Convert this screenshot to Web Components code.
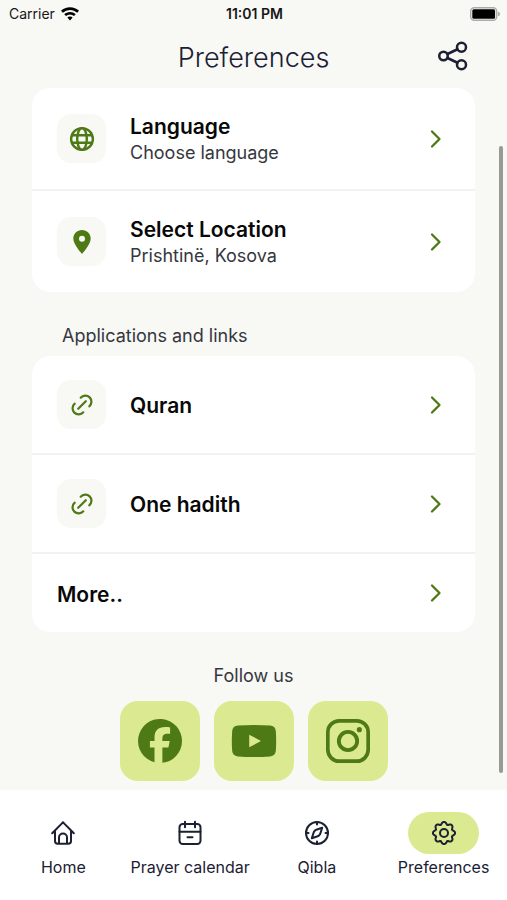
<!DOCTYPE html>
<html lang="en">
<head>
<meta charset="utf-8">
<meta name="viewport" content="width=device-width, initial-scale=1">
<title>Preferences</title>
<style>
:root{--page:#f8f8f5;--card:#fff;--green:#4e7a15;--lime:#dbea90;--ink:#1b2033;--soft:#35373e}
body{margin:0;background:var(--page);color:var(--ink);font-family:Inter,"Liberation Sans",sans-serif}
</style>
</head>
<body>
<preferences-app>
  <status-bar slot="top"></status-bar>
  <page-header slot="top">Preferences</page-header>
  <settings-group>
    <settings-row icon="globe" tall>Language<span slot="detail">Choose language</span></settings-row>
    <settings-row icon="pin" tall>Select Location<span slot="detail">Prishtinë, Kosova</span></settings-row>
  </settings-group>
  <settings-group heading="Applications and links">
    <settings-row icon="link" href="#quran">Quran</settings-row>
    <settings-row icon="link" href="#hadith">One hadith</settings-row>
    <settings-row href="#more">More..</settings-row>
  </settings-group>
  <follow-links>Follow us</follow-links>
  <tab-bar slot="bottom">
    <tab-item icon="home" href="#home">Home</tab-item>
    <tab-item icon="calendar" href="#calendar">Prayer calendar</tab-item>
    <tab-item icon="compass" href="#qibla">Qibla</tab-item>
    <tab-item icon="gear" href="#preferences" active>Preferences</tab-item>
  </tab-bar>
</preferences-app>
<script>
const gear = (() => {
  const pts = [];
  for (let i = 0; i < 96; i++) {
    const a = i / 96 * Math.PI * 2, r = 10 + 1.2 * Math.cos(8 * a) - .15 * Math.cos(16 * a);
    pts.push((12 + r * Math.sin(a)).toFixed(2) + ' ' + (12 - r * Math.cos(a)).toFixed(2));
  }
  return 'M' + pts.join('L') + 'Z';
})();
const ICONS = {
  globe: '<g stroke-width="2.4"><circle cx="12" cy="12" r="10.9"/><ellipse cx="12" cy="12" rx="4.8" ry="10.9"/><path d="M2.3 8.2h19.4M2.3 15.8h19.4"/></g>',
  pin: '<path fill="currentColor" stroke="none" fill-rule="evenodd" d="M12 0C7 0 3.3 3.8 3.3 8.6 3.3 14.7 12 24 12 24s8.7-9.3 8.7-15.4C20.7 3.8 17 0 12 0Zm0 5.7a3 3 0 1 1 0 6 3 3 0 0 1 0-6Z"/>',
  link: '<g stroke-width="2.2"><path d="M8.2 15.8l7.600-7.600M10.700 4.700A6.100 6.100 0 1 1 19.300 13.300M13.300 19.300A6.100 6.100 0 1 1 4.700 10.700"/></g>',
  chevron: '<path stroke-width="2.3" d="M8 4.500l7.500 7.500-7.500 7.500"/>',
  share: '<g stroke-width="2"><circle cx="4.4" cy="12" r="3.4"/><circle cx="18.8" cy="5" r="3.6"/><circle cx="18.8" cy="19" r="3.6"/><path d="M7.6 10.4l8-3.8M7.6 13.6l8 3.8"/></g>',
  facebook: '<path fill="currentColor" stroke="none" d="M24 12a12 12 0 1 0-15 11.6v-8H6.5V12H9v-1.6c0-4.1 1.9-6 5.9-6 .8 0 2.1.1 2.6.3v3.3h-1.4c-2 0-2.8.8-2.8 2.7V12h4l-.7 3.6h-3.3v8.3A12 12 0 0 0 24 12Z"/>',
  youtube: '<path fill="currentColor" stroke="none" fill-rule="evenodd" d="M3.2 3.6Q12 3 20.8 3.6Q23.6 3.8 23.9 6.5Q24.3 12 23.9 17.5Q23.6 20.1 20.8 20.4Q12 21 3.2 20.4Q.4 20.1 .1 17.5Q-.3 12 .1 6.5Q.4 3.8 3.2 3.6ZM9.4 8.6v6.8L15.8 12Z"/>',
  instagram: '<rect x="1" y="1" width="22" height="22" rx="6.2" stroke-width="2"/><circle cx="12" cy="12" r="5" stroke-width="2.1"/><circle cx="18.2" cy="5.8" r="1.4" fill="currentColor" stroke="none"/>',
  home: '<path d="M1.2 12.3 10.7 2.6 12 1.2l1.300 1.400 9.5 9.7M4 10v10a2.8 2.8 0 0 0 2.8 2.8h10.4A2.8 2.8 0 0 0 20 20V10M8 22.5v-6a4 4 0 0 1 8 0v6"/>',
  calendar: '<rect x="1.5" y="3" width="21" height="20" rx="3.2"/><path d="M1.5 10.8h21M7 .8v5.4M17 .8v5.4M9.5 16.3h5"/>',
  compass: '<circle cx="12" cy="12" r="11"/><path d="M12 1v2.5M12 20.5V23M1 12h2.5M20.500 12H23M17.200 6.800l-6.600 2.200-1.600 1.600-2.200 6.600 6.600-2.200 1.600-1.600Z"/>',
  gear: '<path d="' + gear + '"/><circle cx="12" cy="12" r="4"/>',
  wifi: '<g stroke="none" fill="currentColor"><path d="M12 3C7.300 3 3 4.800 0 7.800l2.500 2.600A13.500 13.500 0 0 1 12 6.600c3.700 0 7 1.400 9.500 3.800L24 7.800A17 17 0 0 0 12 3Z"/><path d="M12 9.200c-3 0-5.700 1.200-7.700 3.100l2.400 2.500a7.600 7.600 0 0 1 10.600 0l2.400-2.500A11 11 0 0 0 12 9.200Z"/><path d="M12 15.300c-1.400 0-2.600.5-3.500 1.400L12 20.500l3.500-3.800a5 5 0 0 0-3.500-1.400Z"/></g>'
};
class Base extends HTMLElement {
  connectedCallback() {
    if (this.shadowRoot) return;
    this.attachShadow({mode: 'open'}).innerHTML = '<style>*{box-sizing:border-box}a{color:inherit;text-decoration:none}button{font:inherit;color:inherit;background:none;border:0;padding:0;cursor:pointer}' + this.css() + '</style>' + this.html();
  }
}
customElements.define('app-icon', class extends Base {
  css() { return ':host{display:inline-flex;flex:none;width:24px;height:24px}svg{width:100%;height:100%;overflow:visible}'; }
  html() { return `<svg viewBox="0 0 24 24" fill="none" stroke="currentColor" stroke-width="2" stroke-linecap="round" stroke-linejoin="round" aria-hidden="true">${ICONS[this.getAttribute('name')]}</svg>`; }
});
customElements.define('preferences-app', class extends Base {
  css() { return `:host{display:flex;flex-direction:column;min-height:100vh;position:relative}
    main{flex:1;padding:0 32px 9px}
    .thumb{position:absolute;right:4px;top:146px;bottom:127px;width:4px;border-radius:2px;background:#999a96}`; }
  html() { return '<slot name="top"></slot><main><slot></slot></main><slot name="bottom"></slot><div class="thumb"></div>'; }
});
customElements.define('status-bar', class extends Base {
  css() { return `:host{display:grid;grid-template-columns:1fr auto 1fr;align-items:center;height:28px;padding:0 7px 0 9px;font-size:14px;line-height:20px;color:#161616}
    .left{display:flex;align-items:center;gap:6px}app-icon{width:18px;height:18px;color:#000}
    b{font-weight:600}.battery{justify-self:end;width:30px;height:14px}`; }
  html() { return `<span class="left"><span>Carrier</span><app-icon name="wifi"></app-icon></span><b>11:01 PM</b>
    <svg class="battery" viewBox="0 0 30 14" aria-label="Battery"><rect x=".7" y=".7" width="26" height="12.600" rx="3.500" fill="none" stroke="#aaaba7" stroke-width="1.400"/><rect x="2.300" y="2.300" width="22.800" height="9.400" rx="1.500"/><path d="M28 4.700q2 .6 2 2.300t-2 2.300Z" fill="#aaaba7"/></svg>`; }
});
customElements.define('page-header', class extends Base {
  css() { return `:host{display:grid;grid-template-columns:1fr auto 1fr;align-items:center;height:60px;padding:0 39px}
    h1{grid-column:2;margin:0;font-size:27px;line-height:36px;font-weight:300}
    button{justify-self:end;display:flex;padding-bottom:4px}app-icon{width:30px;height:30px}`; }
  html() { return '<h1><slot></slot></h1><button type="button" aria-label="Share"><app-icon name="share"></app-icon></button>'; }
});
customElements.define('settings-group', class extends Base {
  css() { return `:host{display:block}
    h2{margin:0;padding:31px 30px 7px;font-size:18px;line-height:26px;font-weight:400;color:var(--soft)}
    .card{display:grid;gap:2px;border-radius:18px;background:#f2f2f0;overflow:hidden}`; }
  html() { const h = this.getAttribute('heading'); return `${h ? `<h2>${h}</h2>` : ''}<div class="card"><slot></slot></div>`; }
});
customElements.define('settings-row', class extends Base {
  css() { return `:host{display:block;background:var(--card)}
    .row{display:flex;align-items:center;width:100%;min-height:78px;padding:14px 27px 14px 25px;text-align:left}
    .row.icon{min-height:97px;gap:24px}.row.tall{min-height:101px}
    .tile{display:grid;place-items:center;flex:none;width:49px;height:49px;border-radius:14px;background:var(--page);color:var(--green)}
    .text{flex:1;display:grid;padding-top:3px}
    .title{font-size:21px;line-height:26px;font-weight:600;color:#080808}
    ::slotted([slot=detail]){font-size:18px;line-height:26px;color:var(--soft)}
    .go{width:24px;height:24px;color:var(--green)}`; }
  html() {
    const i = this.getAttribute('icon'), href = this.getAttribute('href'), tag = href ? 'a' : 'button';
    const cls = 'row' + (i ? ' icon' : '') + (this.hasAttribute('tall') ? ' tall' : '');
    return `<${tag} class="${cls}" ${href ? `href="${href}"` : 'type="button"'}>${i ? `<span class="tile"><app-icon name="${i}"></app-icon></span>` : ''}<span class="text"><span class="title"><slot></slot></span><slot name="detail"></slot></span><app-icon class="go" name="chevron"></app-icon></${tag}>`;
  }
});
customElements.define('follow-links', class extends Base {
  css() { return `:host{display:block;padding-top:31px;text-align:center}
    h2{margin:0 0 12px;font-size:18px;line-height:26px;font-weight:400;color:var(--soft)}
    nav{display:flex;justify-content:center;gap:14px}
    a{display:grid;place-items:center;width:80px;height:80px;border-radius:18px;background:var(--lime);color:var(--green)}
    app-icon{width:44px;height:44px}`; }
  html() { return '<h2><slot></slot></h2><nav>' + ['Facebook', 'YouTube', 'Instagram'].map(n => `<a href="#${n}" aria-label="${n}"><app-icon name="${n.toLowerCase()}"></app-icon></a>`).join('') + '</nav>'; }
});
customElements.define('tab-bar', class extends Base {
  css() { return ':host{display:block;background:#fff}nav{display:grid;grid-template-columns:repeat(4,minmax(0,1fr));padding:22px 0 21px}'; }
  html() { return '<nav><slot></slot></nav>'; }
});
customElements.define('tab-item', class extends Base {
  css() { return `:host{display:block}
    a{display:flex;flex-direction:column;align-items:center;gap:1px;font-size:16px;line-height:24px;white-space:nowrap}
    .pill{display:grid;place-items:center;width:71px;height:42px;border-radius:21px}
    :host([active]) .pill{background:var(--lime)}`; }
  html() { return `<a href="${this.getAttribute('href')}" ${this.hasAttribute('active') ? 'aria-current="page"' : ''}><span class="pill"><app-icon name="${this.getAttribute('icon')}"></app-icon></span><span><slot></slot></span></a>`; }
});
</script>
</body>
</html>
